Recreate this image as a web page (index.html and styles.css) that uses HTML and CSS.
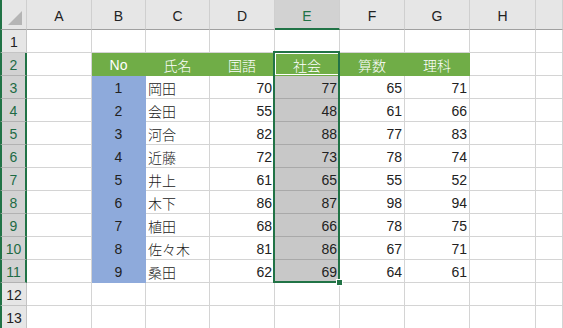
FILE: index.html
```html
<!DOCTYPE html>
<html lang="ja">
<head>
  <meta charset="UTF-8" />
  <title>成績表</title>
  <link rel="stylesheet" href="styles.css">
</head>
<body>
  <div class="sheet">
    <div class="grid">
      <!-- column headers -->
      <div class="hd corner"><span class="tri"></span></div>
      <div class="hd">A</div>
      <div class="hd">B</div>
      <div class="hd">C</div>
      <div class="hd">D</div>
      <div class="hd sel">E</div>
      <div class="hd">F</div>
      <div class="hd">G</div>
      <div class="hd">H</div>
      <div class="hd"></div>

      <!-- 1 -->
      <div class="rh">1</div>
      <div class="c"></div><div class="c"></div><div class="c"></div><div class="c"></div>
      <div class="c"></div><div class="c"></div><div class="c"></div><div class="c"></div><div class="c"></div>

      <!-- 2 -->
      <div class="rh sel">2</div>
      <div class="c"></div>
      <div class="c th">No</div>
      <div class="c th">氏名</div>
      <div class="c th">国語</div>
      <div class="c th active">社会</div>
      <div class="c th">算数</div>
      <div class="c th">理科</div>
      <div class="c"></div><div class="c"></div>

      <!-- 3 -->
      <div class="rh sel">3</div>
      <div class="c"></div>
      <div class="c no">1</div>
      <div class="c">岡田</div>
      <div class="c num">70</div>
      <div class="c num pick">77</div>
      <div class="c num">65</div>
      <div class="c num">71</div>
      <div class="c"></div><div class="c"></div>

      <!-- 4 -->
      <div class="rh sel">4</div>
      <div class="c"></div>
      <div class="c no">2</div>
      <div class="c">会田</div>
      <div class="c num">55</div>
      <div class="c num pick">48</div>
      <div class="c num">61</div>
      <div class="c num">66</div>
      <div class="c"></div><div class="c"></div>

      <!-- 5 -->
      <div class="rh sel">5</div>
      <div class="c"></div>
      <div class="c no">3</div>
      <div class="c">河合</div>
      <div class="c num">82</div>
      <div class="c num pick">88</div>
      <div class="c num">77</div>
      <div class="c num">83</div>
      <div class="c"></div><div class="c"></div>

      <!-- 6 -->
      <div class="rh sel">6</div>
      <div class="c"></div>
      <div class="c no">4</div>
      <div class="c">近藤</div>
      <div class="c num">72</div>
      <div class="c num pick">73</div>
      <div class="c num">78</div>
      <div class="c num">74</div>
      <div class="c"></div><div class="c"></div>

      <!-- 7 -->
      <div class="rh sel">7</div>
      <div class="c"></div>
      <div class="c no">5</div>
      <div class="c">井上</div>
      <div class="c num">61</div>
      <div class="c num pick">65</div>
      <div class="c num">55</div>
      <div class="c num">52</div>
      <div class="c"></div><div class="c"></div>

      <!-- 8 -->
      <div class="rh sel">8</div>
      <div class="c"></div>
      <div class="c no">6</div>
      <div class="c">木下</div>
      <div class="c num">86</div>
      <div class="c num pick">87</div>
      <div class="c num">98</div>
      <div class="c num">94</div>
      <div class="c"></div><div class="c"></div>

      <!-- 9 -->
      <div class="rh sel">9</div>
      <div class="c"></div>
      <div class="c no">7</div>
      <div class="c">植田</div>
      <div class="c num">68</div>
      <div class="c num pick">66</div>
      <div class="c num">78</div>
      <div class="c num">75</div>
      <div class="c"></div><div class="c"></div>

      <!-- 10 -->
      <div class="rh sel">10</div>
      <div class="c"></div>
      <div class="c no">8</div>
      <div class="c">佐々木</div>
      <div class="c num">81</div>
      <div class="c num pick">86</div>
      <div class="c num">67</div>
      <div class="c num">71</div>
      <div class="c"></div><div class="c"></div>

      <!-- 11 -->
      <div class="rh sel">11</div>
      <div class="c"></div>
      <div class="c no">9</div>
      <div class="c">桑田</div>
      <div class="c num">62</div>
      <div class="c num pick">69</div>
      <div class="c num">64</div>
      <div class="c num">61</div>
      <div class="c"></div><div class="c"></div>

      <!-- 12 -->
      <div class="rh">12</div>
      <div class="c"></div><div class="c"></div><div class="c"></div><div class="c"></div>
      <div class="c"></div><div class="c"></div><div class="c"></div><div class="c"></div><div class="c"></div>

      <!-- 13 -->
      <div class="rh">13</div>
      <div class="c"></div><div class="c"></div><div class="c"></div><div class="c"></div>
      <div class="c"></div><div class="c"></div><div class="c"></div><div class="c"></div><div class="c"></div>
    </div>

    <!-- selected range E2:E11 -->
    <div class="selection"><span class="handle"></span></div>
  </div>
</body>
</html>
```

FILE: styles.css
```css
body {
  margin: 0;
  background: #fff;
  font-family: "Liberation Sans", "Noto Sans CJK JP", sans-serif;
  font-size: 14px;
  font-weight: 300;
  color: #222;
  overflow: hidden;
}
.sheet {
  position: relative;
}
.grid {
  display: grid;
  grid-template-columns: 27px 65px 54px 64px 65px 65px 65px 65px 66px 1fr;
  grid-template-rows: 30px repeat(13, 23px);
}
.grid > div {
  box-sizing: border-box;
  display: flex;
  align-items: center;
  white-space: nowrap;
  overflow: hidden;
}

/* headers */
.hd {
  background: #e6e6e6;
  border-right: 1px solid #cfcfcf;
  border-bottom: 1px solid #a0a0a0;
  justify-content: center;
  padding-top: 2px;
  color: #222;
}
.hd.sel {
  background: #d2d2d2;
  color: #217346;
  border-bottom: 2px solid #217346;
  padding-top: 3px;
}
.corner {
  position: relative;
  border-left: 2px solid #217346;
}
.tri {
  position: absolute;
  right: 4px;
  bottom: 4px;
  width: 0;
  height: 0;
  border-left: 14px solid transparent;
  border-bottom: 14px solid #b5b5b5;
}
.rh {
  background: #e6e6e6;
  border-left: 2px solid #217346;
  border-right: 1px solid #c4c4c4;
  border-bottom: 1px solid #c4c4c4;
  justify-content: center;
  padding-top: 1px;
}
.rh.sel {
  background: #d2d2d2;
  color: #1e6b45;
  border-right: 2px solid #217346;
  border-bottom-color: #b2b2b2;
}

/* cells */
.c {
  border-right: 1px solid #d4d4d4;
  border-bottom: 1px solid #d4d4d4;
  padding: 1px 2px 0;
}
.c.th {
  background: #70ad47;
  border-color: #70ad47;
  color: #fff;
  justify-content: center;
}
.c.th.active {
  box-shadow: inset 0 0 0 1px #fff;
  border-right-color: #fff;
}
.c.no {
  background: #8eaadb;
  border-color: #8eaadb;
  justify-content: center;
}
.c.num {
  justify-content: flex-end;
}
.c.pick {
  background: #c8c8c8;
  border-bottom-color: #a9a9a9;
  border-right-color: #c8c8c8;
}

/* selection outline and fill handle */
.selection {
  position: absolute;
  left: 273px;
  top: 51px;
  width: 67px;
  height: 232px;
  box-sizing: border-box;
  border: 2px solid #217346;
}
.handle {
  position: absolute;
  right: -5px;
  bottom: -5px;
  width: 7px;
  height: 7px;
  box-sizing: border-box;
  background: #217346;
  border: 1px solid #fff;
}
```
